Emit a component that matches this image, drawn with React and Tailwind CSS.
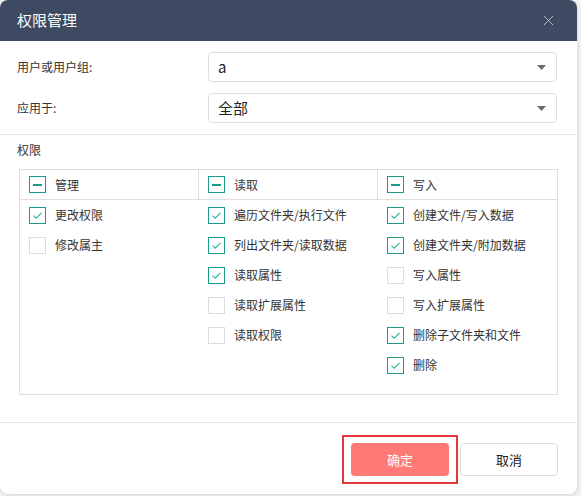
import { X } from "lucide-react"

const columns = [
  {
    title: "管理",
    items: [
      { label: "更改权限", checked: true },
      { label: "修改属主", checked: false },
    ],
  },
  {
    title: "读取",
    items: [
      { label: "遍历文件夹/执行文件", checked: true },
      { label: "列出文件夹/读取数据", checked: true },
      { label: "读取属性", checked: true },
      { label: "读取扩展属性", checked: false },
      { label: "读取权限", checked: false },
    ],
  },
  {
    title: "写入",
    items: [
      { label: "创建文件/写入数据", checked: true },
      { label: "创建文件夹/附加数据", checked: true },
      { label: "写入属性", checked: false },
      { label: "写入扩展属性", checked: false },
      { label: "删除子文件夹和文件", checked: true },
      { label: "删除", checked: true },
    ],
  },
]

function Checkbox({ checked }) {
  return (
    <span
      className={
        checked
          ? "flex h-[17px] w-[17px] shrink-0 items-center justify-center border border-[#1a9b8a] bg-white"
          : "flex h-[17px] w-[17px] shrink-0 items-center justify-center border border-[#dcdcdc] bg-white"
      }
    >
      {checked && (
        <svg width="11" height="9" viewBox="0 0 11 9" fill="none">
          <path d="M1.5 4.6 L4.2 7.2 L9.5 1.8" stroke="#2fb39f" strokeWidth="1.2" />
        </svg>
      )}
    </span>
  )
}

function Indeterminate() {
  return (
    <span className="flex h-[17px] w-[17px] shrink-0 items-center justify-center border border-[#1a9b8a] bg-white">
      <span className="h-[2px] w-[9px] bg-[#1a9b8a]" />
    </span>
  )
}

function Select({ value }) {
  return (
    <div className="flex h-[30px] flex-1 items-center justify-between rounded-[4px] border border-[#dedede] bg-white pl-[9px] pr-[10px]">
      <span className="text-[15px] text-[#222]">{value}</span>
      <svg width="9" height="5" viewBox="0 0 9 5">
        <path d="M0 0 H9 L4.5 5 Z" fill="#6b6b6b" />
      </svg>
    </div>
  )
}

export default function App() {
  return (
    <div
      className="h-[496px] w-[581px] bg-[#f3f3f3]"
      style={{ fontFamily: '"Noto Sans CJK SC", "Noto Sans", sans-serif' }}
    >
      <div className="flex h-[494px] w-[577px] flex-col overflow-hidden rounded-lg bg-white shadow-[0_1px_4px_rgba(0,0,0,0.15)]">
        <div className="flex h-[41px] shrink-0 items-center justify-between bg-[#3d4a61] pl-[17px] pr-[20px]">
          <span className="text-[15px] text-white">权限管理</span>
          <X size={17} strokeWidth={1.2} className="text-[#c9cfd9]" />
        </div>

        <div className="flex flex-col gap-[11px] border-b border-[#e3e3e3] py-[11px] pl-[17px] pr-[20px]">
          <div className="flex items-center">
            <span className="w-[191px] text-[12px] text-[#333]">用户或用户组:</span>
            <Select value="a" />
          </div>
          <div className="flex items-center">
            <span className="w-[191px] text-[12px] text-[#333]">应用于:</span>
            <Select value="全部" />
          </div>
        </div>

        <div className="flex flex-col pl-[17px] pr-[19px] pt-[6px]">
          <span className="text-[12px] text-[#333]">权限</span>
          <div className="ml-[2px] mt-[10px] grid h-[226px] grid-cols-3 border border-[#dedede]">
            {columns.map((col, i) => (
              <div key={col.title} className="flex flex-col">
                <div
                  className={
                    i < 2
                      ? "flex h-[30px] items-center gap-[9px] border-b border-r border-[#dedede] px-[9px]"
                      : "flex h-[30px] items-center gap-[9px] border-b border-[#dedede] px-[9px]"
                  }
                >
                  <Indeterminate />
                  <span className="text-[12px] text-[#333]">{col.title}</span>
                </div>
                <div className="flex flex-col">
                  {col.items.map((item) => (
                    <div key={item.label} className="flex h-[30px] items-center gap-[9px] px-[9px]">
                      <Checkbox checked={item.checked} />
                      <span className="text-[12px] text-[#333]">{item.label}</span>
                    </div>
                  ))}
                </div>
              </div>
            ))}
          </div>
        </div>

        <div className="mt-[27px] flex flex-1 items-start justify-end border-t border-[#e3e3e3] pr-[19px] pt-[12px]">
          <div className="border-2 border-[#e3373c] px-[7px] py-[6px]">
            <button
              type="button"
              className="flex h-[33px] w-[98px] items-center justify-center rounded-[4px] bg-[#ff7a77] text-[13px] text-white"
            >
              确定
            </button>
          </div>
          <button
            type="button"
            className="ml-[2px] mt-[8px] flex h-[33px] w-[98px] items-center justify-center rounded-[4px] border border-[#dcdcdc] bg-white text-[13px] text-[#222]"
          >
            取消
          </button>
        </div>
      </div>
    </div>
  )
}
